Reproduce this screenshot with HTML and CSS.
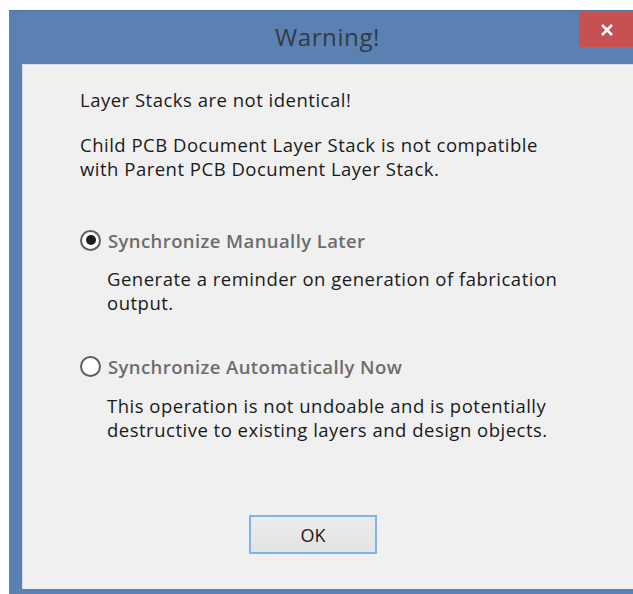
FILE: index.html
```html
<!DOCTYPE html>
<html>
<head>
<meta charset="utf-8">
<link rel="stylesheet" href="styles.css">
</head>
<body>
<div class="window">
  <div class="titlebar">
    <span class="title">Warning!</span>
    <div class="close">
      <svg width="14" height="12" viewBox="0 0 14 12"><path d="M2 1 L12 11 M12 1 L2 11" stroke="#fff" stroke-width="2.6" fill="none"/></svg>
    </div>
  </div>
  <div class="client">
    <p class="msg first">Layer Stacks are not identical!</p>
    <p class="msg">Child PCB Document Layer Stack is not compatible<br>with Parent PCB Document Layer Stack.</p>

    <div class="option">
      <span class="radio checked"></span>
      <span class="label">Synchronize Manually Later</span>
    </div>
    <p class="desc">Generate a reminder on generation of fabrication<br>output.</p>

    <div class="option second">
      <span class="radio"></span>
      <span class="label">Synchronize Automatically Now</span>
    </div>
    <p class="desc">This operation is not undoable and is potentially<br>destructive to existing layers and design objects.</p>

    <div class="actions">
      <button class="ok">OK</button>
    </div>
  </div>
</div>
</body>
</html>
```
FILE: styles.css
```css
html, body {
  margin: 0;
  padding: 0;
  background: #ffffff;
  overflow: hidden;
}

.window {
  margin: 10px 0 0 9px;
  width: 637px;
  height: 584px;
  background: #5b80b2;
  border-top: 1px solid #4f73a4;
  box-sizing: border-box;
  padding: 0 0 5px 13px;
  display: flex;
  flex-direction: column;
}

.titlebar {
  position: relative;
  height: 53px;
  display: flex;
  align-items: center;
  justify-content: center;
  margin-left: -13px;
}

.title {
  font-family: "Open Sans", "Noto Sans", sans-serif;
  font-size: 24px;
  letter-spacing: 0.6px;
  color: #333a44;
  margin-top: -2px;
}

.close {
  position: absolute;
  left: 570px;
  top: 1px;
  width: 56px;
  height: 35px;
  background: #c75050;
  display: flex;
  align-items: center;
  justify-content: center;
}

.client {
  flex: 1;
  background: #f0f0f0;
  border-top: 1px solid #d6dde8;
  border-left: 1px solid #d6dde8;
  padding: 23px 0 0 57px;
  font-family: "Open Sans", "Noto Sans", sans-serif;
  font-size: 18.5px;
  letter-spacing: 0.5px;
  color: #1a1a1a;
  display: flex;
  flex-direction: column;
}

.msg {
  margin: 0;
  line-height: 24px;
}

.msg + .msg {
  margin-top: 21px;
}

.option {
  display: flex;
  align-items: center;
  gap: 7px;
  margin-top: 47px;
  height: 24px;
  letter-spacing: 0.4px;
}

.option.second {
  margin-top: 39px;
}

.radio {
  width: 17px;
  height: 17px;
  border-radius: 50%;
  border: 2px solid #5e5e5e;
  background: #ffffff;
  display: flex;
  align-items: center;
  justify-content: center;
  flex: none;
}

.radio.checked::after {
  content: "";
  width: 10px;
  height: 10px;
  border-radius: 50%;
  background: #1c1c1c;
}

.label {
  color: #6d6d6d;
  font-weight: 600;
}

.desc {
  margin: 15px 0 0 27px;
  line-height: 24px;
}

.option.second + .desc {
  margin-top: 16px;
}

.actions {
  margin-top: 73px;
  margin-left: 169px;
}

.ok {
  width: 128px;
  height: 39px;
  border: 2px solid #7eb4ea;
  background: linear-gradient(#ececec, #e3e3e3);
  font-family: "Open Sans", "Noto Sans", sans-serif;
  font-size: 18px;
  color: #1a1a1a;
  padding: 0;
}
```
